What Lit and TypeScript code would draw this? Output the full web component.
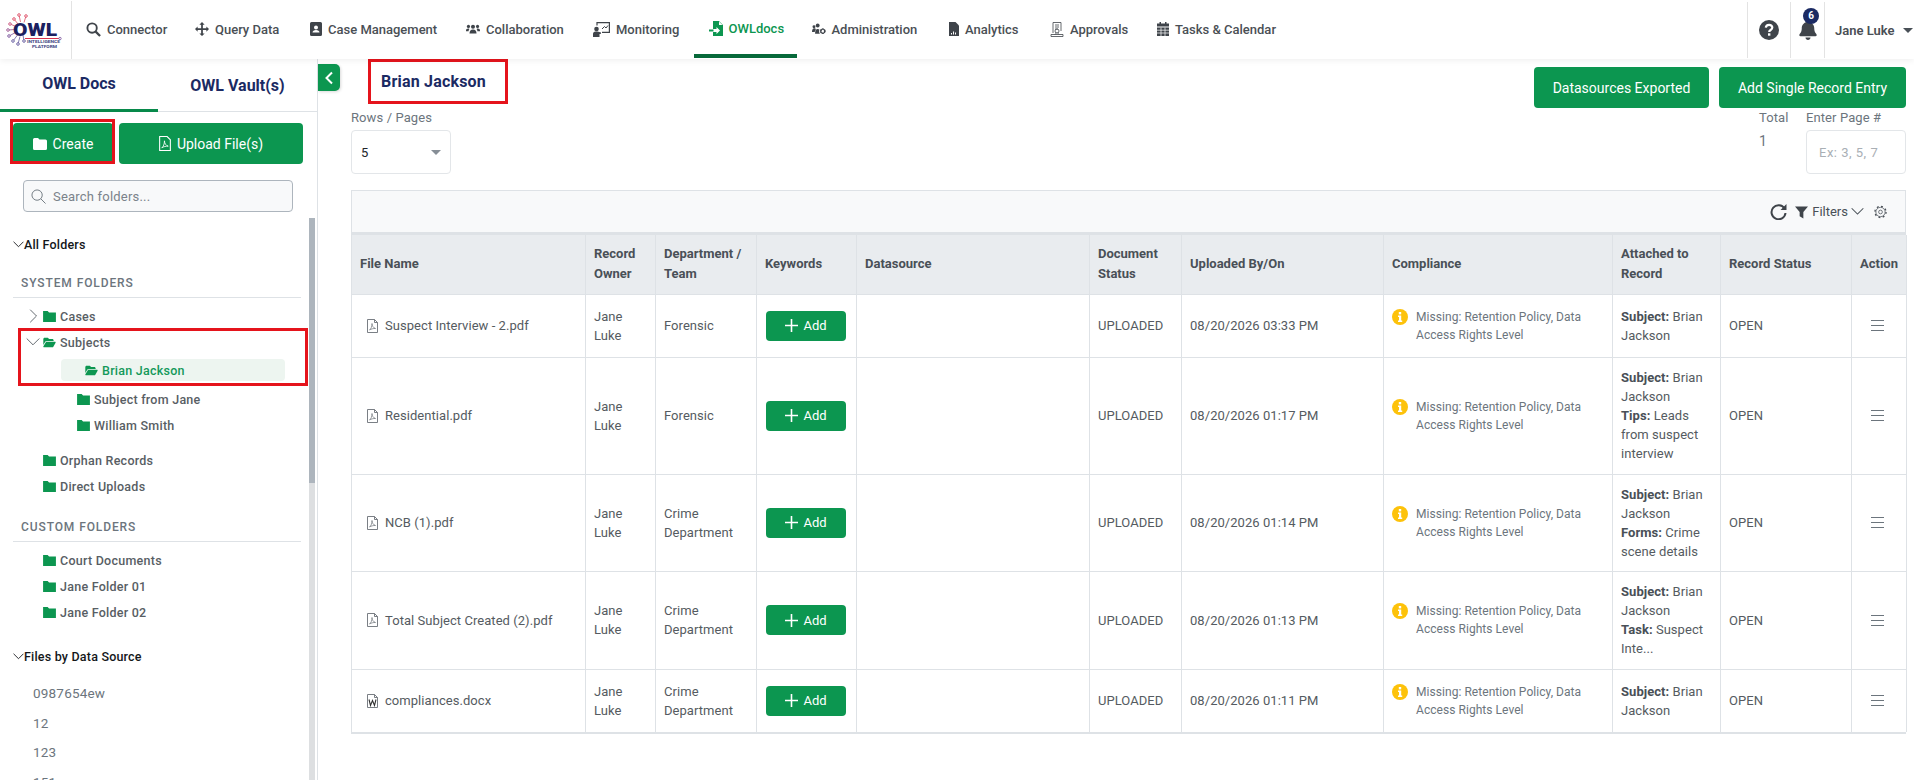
import { LitElement, css, html, svg } from 'lit';
import { customElement } from 'lit/decorators.js';

const folder = () => html`<svg class="folder" viewBox="0 0 14 12"><path d="M0 0h5l1.5 1.5H14V12H0z" /></svg>`;
const folderOpen = () => html`<svg class="folder" viewBox="0 0 576 512"><path d="M88.7 223.8L0 375.8V96C0 60.7 28.7 32 64 32H181.5c17 0 33.3 6.7 45.3 18.7l26.5 26.5c12 12 28.3 18.7 45.3 18.7H416c35.3 0 64 28.7 64 64v32H144c-22.8 0-43.8 12.1-55.3 31.8zm27.6 16.1C122.1 230 132.6 224 144 224H544c11.5 0 22 6.1 27.7 16.1s5.7 22.2-.1 32.1l-112 192C453.9 474 443.4 480 432 480H32c-11.5 0-22-6.1-27.7-16.1s-5.7-22.2 .1-32.1l112-192z" /></svg>`;
const chevDown = () => html`<svg class="chev" viewBox="0 0 10 10"><polyline points="0.5,2.5 5,7 9.5,2.5" /></svg>`;
const chevRight = () => html`<svg class="chev" viewBox="0 0 10 10"><polyline points="3,0.5 7.5,5 3,9.5" /></svg>`;
const pdf = () => html`<svg class="fileic" viewBox="0 0 11 14"><path class="ln" d="M.5.5h7l3 3v10H.5z" /><path class="ln" d="M7.5.5v3h3" /><path class="ln thin" d="M2.5 11c1.500-1 2.500-3.500 2.500-6.500C5 7 6.500 9 8.500 9.500 6.500 9.300 4 10 2.500 11z" /></svg>`;
const word = () => html`<svg class="fileic" viewBox="0 0 11 14"><path class="ln" d="M.5.5h7l3 3v10H.5z" /><path class="ln" d="M7.500.5v3h3" /><polyline class="ln wd" points="2,5.500 3.500,11.500 5.500,6.500 7.500,11.500 9,5.500" /></svg>`;

const navIcons: Record<string, any> = {
    connector: html`<svg class="nv" width="15" height="15" viewBox="0 0 16 16"><circle cx="6.500" cy="6.500" r="5" fill="none" stroke="currentColor" stroke-width="2" /><line x1="10.300" y1="10.300" x2="15" y2="15" stroke="currentColor" stroke-width="2.400" /></svg>`,
    query: html`<svg class="nv" width="14" height="14" viewBox="0 0 16 16"><path fill="currentColor" d="M8 0l3 3H9v4h4V5l3 3-3 3V9H9v4h2l-3 3-3-3h2V9H3v2L0 8l3-3v2h4V3H5z" /></svg>`,
    case: html`<svg class="nv" width="12" height="14" viewBox="0 0 12 14"><path fill="currentColor" fill-rule="evenodd" d="M1.500 0h9A1.500 1.500 0 0 1 12 1.500v11a1.500 1.500 0 0 1-1.500 1.500h-9A1.500 1.500 0 0 1 0 12.500v-11A1.500 1.500 0 0 1 1.500 0zM6 3.500a2 2 0 1 0 0 4 2 2 0 0 0 0-4zM2.500 10.500h7C9.500 9 8 8 6 8s-3.500 1-3.500 2.500z" /></svg>`,
    collab: html`<svg class="nv" width="14" height="12" viewBox="0 0 16 12"><g fill="currentColor"><circle cx="8" cy="3.500" r="2.300" /><circle cx="2.800" cy="3" r="1.800" /><circle cx="13.200" cy="3" r="1.800" /><path d="M4 11c0-3 1.500-4.500 4-4.500S12 8 12 11z" /><path d="M0 8c0-1.500 1-2.500 2.500-2.500.6 0 1 .1 1.400.4C3.200 6.700 3 7.500 3 8.500H0zM16 8c0-1.500-1-2.500-2.500-2.500-.6 0-1 .1-1.400.4.700.8.900 1.600.9 2.600h3z" /></g></svg>`,
    monitor: html`<svg class="nv" width="17" height="15" viewBox="0 0 17 15"><path fill="none" stroke="currentColor" stroke-width="1.200" d="M4 3.500V.6h12.400v9.800H9" /><path fill="none" stroke="currentColor" d="M9 7l2.500-2.500 1.500 1.500 2-2.500" /><circle cx="3.500" cy="7" r="2.300" fill="currentColor" /><path fill="currentColor" d="M0 15v-3c0-1.500 1-2.500 2.500-2.500h2L8 10.500v1.300L6.500 12v3z" /></svg>`,
    docs: html`<svg class="nv" width="14" height="15" viewBox="0 0 14 15"><path fill="currentColor" d="M4 0h6l4 4v11H4v-4h3.500v2L11 9.500 7.500 6v2H4zM10 .5V4h3.500z" /><path fill="currentColor" d="M0 8.500h4.500v2H0z" /></svg>`,
    admin: html`<svg class="nv" width="14" height="12" viewBox="0 0 16 13"><g fill="currentColor"><circle cx="6.500" cy="2.500" r="2.200" /><circle cx="2.300" cy="4" r="1.700" /><path d="M0 10c0-3 1-4.500 2.500-4.500 1 0 1.500.5 2 1L3 10zM3.500 12c0-3.500 1-5.500 3-5.500 1 0 1.500.3 2 .8-.7 1.500-.5 3.200.5 4.700z" /></g><circle cx="12.300" cy="9" r="2.300" fill="none" stroke="currentColor" stroke-width="1.800" stroke-dasharray="1.600 .7" /><circle cx="12.300" cy="9" r="2.500" fill="none" stroke="currentColor" /></svg>`,
    analytics: html`<svg class="nv" width="10" height="14" viewBox="0 0 10 14"><path fill="currentColor" d="M0 0h6.500L10 3.500V14H0z" /><path fill="#fff" d="M2 11h1v1.500H2zM4 9.500h1v3H4zM6 10.500h1v2H6z" /></svg>`,
    approvals: html`<svg class="nv" width="14" height="15" viewBox="0 0 14 15"><path fill="none" stroke="currentColor" stroke-width=".8" d="M3 11V.5h8V9M5 3h4M5 5h4M5 7h3" /><circle cx="7" cy="9" r="2" fill="none" stroke="currentColor" stroke-width=".8" /><path fill="none" stroke="currentColor" stroke-width=".8" d="M1 14.500v-2h12v2zM5 12.500c1-1 1-1.500 1-2M9 12.500c-1-1-1-1.500-1-2" /></svg>`,
    tasks: html`<svg class="nv" width="12" height="14" viewBox="0 0 12 14"><path fill="currentColor" d="M2.500 0h1.500v1.500h4V0h1.500v1.500H12v3H0v-3h2.500zM0 5.500h12V14H0z" /><path fill="none" stroke="#fff" stroke-width=".7" d="M0 8.200h12M0 11h12M4 5.500V14M8 5.500V14" /></svg>`,
};

const nav = [
    { label: 'Connector', icon: 'connector', w: 109 },
    { label: 'Query Data', icon: 'query', w: 115 },
    { label: 'Case Management', icon: 'case', w: 156 },
    { label: 'Collaboration', icon: 'collab', w: 127 },
    { label: 'Monitoring', icon: 'monitor', w: 115.5 },
    { label: 'OWLdocs', icon: 'docs', w: 103, active: true },
    { label: 'Administration', icon: 'admin', w: 137.5 },
    { label: 'Analytics', icon: 'analytics', w: 101 },
    { label: 'Approvals', icon: 'approvals', w: 107 },
    { label: 'Tasks & Calendar', icon: 'tasks', w: 149.5 },
];

const columns = [
    { label: 'File Name', w: 234 },
    { label: 'Record Owner', w: 70 },
    { label: 'Department / Team', w: 101 },
    { label: 'Keywords', w: 100 },
    { label: 'Datasource', w: 233 },
    { label: 'Document Status', w: 92 },
    { label: 'Uploaded By/On', w: 202 },
    { label: 'Compliance', w: 229 },
    { label: 'Attached to Record', w: 108 },
    { label: 'Record Status', w: 131 },
    { label: 'Action', w: 55 },
];

const rows = [
    { file: 'Suspect Interview - 2.pdf', dept: 'Forensic', date: '08/20/2026 03:33 PM', h: 63, attached: [['Subject:', 'Brian Jackson']] },
    { file: 'Residential.pdf', dept: 'Forensic', date: '08/20/2026 01:17 PM', h: 117, attached: [['Subject:', 'Brian Jackson'], ['Tips:', 'Leads from suspect interview']] },
    { file: 'NCB (1).pdf', dept: 'Crime Department', date: '08/20/2026 01:14 PM', h: 97, attached: [['Subject:', 'Brian Jackson'], ['Forms:', 'Crime scene details']] },
    { file: 'Total Subject Created (2).pdf', dept: 'Crime Department', date: '08/20/2026 01:13 PM', h: 98, attached: [['Subject:', 'Brian Jackson'], ['Task:', 'Suspect Inte...']] },
    { file: 'compliances.docx', dept: 'Crime Department', date: '08/20/2026 01:11 PM', h: 63, word: true, attached: [['Subject:', 'Brian Jackson']] },
];

@customElement('app-root')
export class AppRoot extends LitElement {
    static styles = css`
        :host {
            display: block;
            height: 780px;
            overflow: hidden;
            background: #fff;
            font-family: Roboto, "Liberation Sans", sans-serif;
            font-size: 13px;
            color: #495057;
        }

        * { box-sizing: border-box; }

        /* header */
        .header {
            display: flex;
            height: 59px;
            background: #fff;
            box-shadow: 0 2px 6px rgba(0, 0, 0, 0.06);
            position: relative;
            z-index: 2;
        }

        .logo {
            width: 71.500px;
            margin-top: 1px;
            border-right: 1px solid #e3e3e3;
            flex: none;
        }

        .nav {
            display: flex;
            flex: 1;
        }

        .nav-item {
            display: flex;
            align-items: center;
            flex: none;
            gap: 6px;
            height: 58px;
            padding: 4px 0 0 14.500px;
            border-bottom: 4px solid transparent;
            font-weight: 500;
            color: #4a4f55;
            white-space: nowrap;
        }

        .nav-item.active {
            color: #0c9650;
            border-bottom-color: #07693a;
            padding-top: 2px;
        }

        .nv { flex: none; color: #3f444a; }
        .active .nv { color: #0c9650; }

        .head-cell {
            display: flex;
            align-items: center;
            justify-content: center;
            height: 56px;
            margin-top: 2px;
            border-left: 1px solid #e3e3e3;
            position: relative;
        }

        .help { width: 43px; }
        .bell { width: 34px; }
        .user { width: 90px; gap: 8px; font-weight: 600; color: #4a4f55; justify-content: flex-start; padding-left: 10px; }
        .caret { width: 0; height: 0; border-left: 5px solid transparent; border-right: 5px solid transparent; border-top: 5px solid #495057; }

        .badge {
            position: absolute;
            top: 6px;
            left: 12px;
            width: 16px;
            height: 16px;
            border-radius: 50%;
            background: #1b2a63;
            color: #fff;
            font-size: 10px;
            font-weight: 700;
            text-align: center;
            line-height: 16px;
        }

        /* body layout */
        .body { display: flex; height: 721px; }

        .sidebar {
            display: flex;
            flex-direction: column;
            width: 318px;
            flex: none;
            border-right: 1px solid #dee2e6;
            overflow: hidden;
        }

        .tabs {
            display: flex;
            height: 53px;
            border-bottom: 1px solid #dee2e6;
            flex: none;
        }

        .tab {
            width: 158px;
            height: 53px;
            padding-top: 13px;
            text-align: center;
            font-size: 16px;
            font-weight: 700;
            line-height: 24px;
            color: #1b2a63;
        }

        .tab.on { border-bottom: 3px solid #07894a; }
        .tab.off { padding-top: 15px; width: 159px; }

        .actions {
            display: flex;
            gap: 6px;
            padding: 11px 14px 0 13px;
            position: relative;
            flex: none;
        }

        .btn {
            display: flex;
            align-items: center;
            justify-content: center;
            gap: 6px;
            height: 41px;
            border: 0;
            border-radius: 4px;
            background: #0c9650;
            color: #fff;
            font: inherit;
            font-size: 14px;
        }

        .btn svg { fill: #fff; }
        .create { width: 100px; }
        .upload { width: 184px; }

        .mark {
            position: absolute;
            border: 3px solid #e5141c;
            pointer-events: none;
        }

        .mark.create-mark { left: 10px; top: 7px; width: 105px; height: 45px; }
        .mark.tree-mark { left: 18px; top: 25px; width: 290px; height: 58px; }

        .search {
            display: flex;
            align-items: center;
            gap: 5px;
            width: 270px;
            height: 32px;
            margin: 16px 0 0 23px;
            padding: 0 7px;
            background: #f8f9fa;
            border: 1px solid #adb5bd;
            border-radius: 4px;
            flex: none;
        }

        .search input {
            flex: 1;
            min-width: 0;
            border: 0;
            outline: 0;
            background: transparent;
            font: inherit;
            letter-spacing: 0.2px;
        }

        .search input::placeholder { color: #7b838a; opacity: 1; }

        .side-body { display: flex; flex: 1; min-height: 0; margin-top: 6px; }
        .tree { width: 309px; flex: none; padding-top: 16px; overflow: hidden; }

        .scroll { width: 6px; flex: none; background: #dddfe1; }
        .thumb { height: 265px; background: #adb5bd; }

        .group-title {
            display: flex;
            align-items: center;
            height: 20px;
            padding-left: 13px;
            font-weight: 500;
            font-size: 12.500px;
            color: #14171a;
            letter-spacing: 0.2px;
        }

        .group-title .chev { width: 11px; height: 11px; stroke: #14171a; }

        .heading {
            height: 29px;
            margin: 15px 8px 5px 13px;
            padding-left: 8px;
            border-bottom: 1px solid #dee2e6;
            font-size: 12px;
            font-weight: 500;
            line-height: 28px;
            letter-spacing: 0.9px;
            color: #6c757d;
        }

        .heading.custom { margin-top: 14px; }

        .branch { position: relative; }

        .row {
            display: flex;
            align-items: center;
            gap: 4px;
            height: 26px;
            padding-left: 43px;
            font-size: 12.500px;
            font-weight: 500;
            color: #585e64;
            letter-spacing: 0.25px;
        }

        .row.child { padding-left: 77px; }
        .row.gap { margin-top: 9px; }
        .row.has-chev { padding-left: 26px; }
        .row.has-chev .folder { margin-left: -1px; }

        .row.selected {
            height: 22px;
            margin: 4px 24px 5px 61px;
            padding-left: 24px;
            border-radius: 4px;
            background: #edf5f0;
            color: #14995a;
        }

        .folder { width: 13px; height: 11px; fill: #0c9650; flex: none; }
        .chev { width: 10px; height: 10px; fill: none; stroke: #495057; stroke-width: 0.800; flex: none; }
        .row .chev { width: 14px; height: 14px; stroke-width: 0.600; }

        .source-list { margin: 13px 0 0 33px; }
        .source-list div { height: 29.500px; line-height: 29.500px; font-size: 13.500px; color: #6c757d; letter-spacing: 0.2px; }
        .files-title { margin-top: 21px; }

        /* main */
        .main {
            flex: 1;
            min-width: 0;
            padding: 0 8px 0 33px;
            position: relative;
        }

        .toggle {
            position: absolute;
            left: 0;
            top: 5px;
            display: flex;
            align-items: center;
            justify-content: center;
            width: 22px;
            height: 27px;
            border-radius: 0 5px 5px 0;
            background: #0c9650;
            box-shadow: 1px 1px 3px rgba(0, 0, 0, 0.15);
        }

        .top-row { display: flex; justify-content: space-between; align-items: flex-start; }

        .title {
            display: flex;
            align-items: center;
            width: 140px;
            height: 45px;
            margin-left: 17px;
            padding-left: 10px;
            border: 3px solid #e5141c;
            font-size: 16px;
            font-weight: 700;
            color: #1b2a63;
            letter-spacing: 0.2px;
        }

        .top-actions { display: flex; gap: 10px; padding-top: 8px; }
        .top-actions .btn { height: 41px; }
        .exported { width: 175px; }
        .single { width: 187px; }

        .controls { display: flex; justify-content: space-between; margin-top: 2px; }
        .controls label, .field-label { display: block; height: 16px; line-height: 16px; margin-bottom: 4px; color: #6c757d; letter-spacing: 0.1px; }
        .right-controls { display: flex; }
        .total { width: 47px; }
        .total-val { padding-top: 3px; font-size: 14px; color: #6c757d; }

        .select, .page-input {
            width: 100px;
            height: 44px;
            border: 1px solid #e3e6e9;
            border-radius: 4px;
        }

        .select {
            display: flex;
            align-items: center;
            justify-content: space-between;
            padding: 0 9px;
            color: #212529;
        }

        .select .caret { border-top-color: #868e96; }

        .page-input {
            display: block;
            padding: 0 12px;
            font: inherit;
            outline: 0;
            letter-spacing: 0.5px;
        }

        .page-input::placeholder { color: #a9afb5; opacity: 1; }

        /* table */
        .table-wrap {
            margin-top: 16px;
            border-top: 1px solid #dee2e6;
            border-bottom: 2px solid #dee2e6;
            width: 1555px;
        }

        .toolbar {
            display: flex;
            align-items: center;
            justify-content: flex-end;
            padding-right: 18px;
            background: #f8f9fa;
            border-bottom: 3px solid #dee2e6;
            border-left: 1px solid #dee2e6;
            border-right: 1px solid #dee2e6;
            height: 44px;
            color: #495057;
        }

        .toolbar svg { flex: none; }
        .filters { margin: 0 3px 0 4px; }
        .refresh-gap { margin-left: 8px; }
        .gear-gap { margin-left: 10px; }
        .toolbar .chev { width: 13px; height: 13px; }

        table {
            width: 1555px;
            table-layout: fixed;
            border-collapse: collapse;
        }

        th, td {
            border: 1px solid #dee2e6;
            padding: 0 8px;
            text-align: left;
            vertical-align: middle;
            line-height: 19px;
        }

        tr:last-child td { border-bottom: 0; }
        tr:first-child th { border-top: 0; }

        th {
            height: 59px;
            background: #e9ecef;
            font-weight: 700;
            color: #495057;
            line-height: 20px;
        }

        td { color: #555b61; letter-spacing: 0.05px; }

        .file-cell { display: flex; align-items: center; gap: 7px; padding-left: 7px; }
        .fileic { width: 11px; height: 14px; flex: none; }
        .ln { fill: none; stroke: #6b7177; stroke-width: 0.900; }
        .ln.thin { stroke-width: 0.700; }
        .ln.wd { stroke: #333; stroke-width: 1.100; }

        .add {
            width: 80px;
            height: 30px;
            margin-left: 1px;
            gap: 5px;
            font-size: 13px;
        }

        .compliance {
            display: flex;
            gap: 8px;
            font-size: 12px;
            line-height: 18px;
            color: #6c757d;
            letter-spacing: 0.05px;
        }

        .compliance svg { flex: none; margin-top: 1px; }
        .attached b { font-weight: 700; color: #495057; }

        .action { text-align: center; padding: 0 3px 0 0; line-height: 0; }
    `;

    render() {
        return html`
            <div class="header">
                <div class="logo">${this.renderLogo()}</div>
                <div class="nav">
                    ${nav.map(n => html`<div class="nav-item ${n.active ? 'active' : ''}" style="width:${n.w}px">${navIcons[n.icon]}<span>${n.label}</span></div>`)}
                </div>
                <div class="head-cell help">
                    <svg width="20" height="20" viewBox="0 0 20 20"><circle cx="10" cy="10" r="10" fill="#3f444a" /><path d="M6.800 7.600C7 5.500 8.500 4.800 10.100 4.800c1.900 0 3.200 1.100 3.200 2.700 0 2.600-3.100 2.300-3.100 4.400" fill="none" stroke="#fff" stroke-width="2.200" /><rect x="9" y="13.300" width="2.400" height="2.400" fill="#fff" /></svg>
                </div>
                <div class="head-cell bell">
                    <svg width="18" height="20" viewBox="0 0 448 512" fill="#3f444a"><path d="M224 0c-17.700 0-32 14.300-32 32V51.200C119 66 64 130.600 64 208v18.800c0 47-17.300 92.400-48.500 127.600l-7.400 8.300c-8.400 9.400-10.400 22.900-5.300 34.400S19.400 416 32 416H416c12.600 0 24-7.400 29.200-18.900s3.100-25-5.300-34.400l-7.400-8.300C401.300 319.200 384 273.900 384 226.800V208c0-77.400-55-142-128-156.800V32c0-17.700-14.300-32-32-32zm45.300 493.300c12-12 18.700-28.300 18.700-45.300H224 160c0 17 6.700 33.300 18.700 45.300s28.300 18.700 45.300 18.700s33.300-6.700 45.300-18.700z" /></svg>
                    <span class="badge">6</span>
                </div>
                <div class="head-cell user">Jane Luke <span class="caret"></span></div>
            </div>
            <div class="body">
                ${this.renderSidebar()}
                <div class="main">
                    <div class="toggle"><svg width="10" height="14" viewBox="0 0 10 14"><polyline points="8,1.500 2.500,7 8,12.500" fill="none" stroke="#fff" stroke-width="2" /></svg></div>
                    <div class="top-row">
                        <div class="title">Brian Jackson</div>
                        <div class="top-actions">
                            <button class="btn exported">Datasources Exported</button>
                            <button class="btn single">Add Single Record Entry</button>
                        </div>
                    </div>
                    <div class="controls">
                        <div>
                            <label>Rows / Pages</label>
                            <div class="select"><span>5</span><span class="caret"></span></div>
                        </div>
                        <div class="right-controls">
                            <div class="total">
                                <div class="field-label">Total</div>
                                <div class="total-val">1</div>
                            </div>
                            <div>
                                <div class="field-label">Enter Page #</div>
                                <input class="page-input" placeholder="Ex: 3, 5, 7" />
                            </div>
                        </div>
                    </div>
                    ${this.renderTable()}
                </div>
            </div>
        `;
    }

    renderLogo() {
        // circuit traces around the owl wordmark, red at the top going to purple at the bottom
        const nodes: [number, number, string][] = [
            [26, 15, '#d8344f'], [19, 14, '#d8344f'], [14, 18, '#d8344f'], [10, 23, '#c23a6a'], [8, 29, '#8a3c80'],
            [9, 35, '#6a3f8f'], [13, 40, '#4f4490'], [18, 43, '#4f4490'], [24, 40, '#4f4490'],
        ];
        return html`<svg width="71" height="58" viewBox="0 0 71 58">
            ${nodes.map(n => svg`<line x1="${n[0]}" y1="${n[1]}" x2="${n[0] * 0.5 + 11}" y2="${n[1] * 0.5 + 14}" stroke="${n[2]}" stroke-width=".7" /><circle cx="${n[0]}" cy="${n[1]}" r="1.300" fill="#fff" stroke="${n[2]}" stroke-width=".8" />`)}
            <text x="13" y="35" font-family="Roboto, sans-serif" font-weight="900" font-size="18" fill="#1b2060" textLength="44" lengthAdjust="spacingAndGlyphs">OWL</text>
            <line x1="25" y1="37.500" x2="60" y2="37.500" stroke="#d8344f" stroke-width="1" />
            <circle cx="60" cy="37.500" r="1.200" fill="#fff" stroke="#6a3f8f" stroke-width=".7" />
            <text x="27" y="42" font-family="Roboto, sans-serif" font-weight="700" font-size="4" fill="#3a3f80" textLength="33" lengthAdjust="spacingAndGlyphs">INTELLIGENCE</text>
            <text x="32" y="46.500" font-family="Roboto, sans-serif" font-weight="700" font-size="4" fill="#3a3f80" textLength="25" lengthAdjust="spacingAndGlyphs">PLATFORM</text>
        </svg>`;
    }

    renderSidebar() {
        return html`
            <div class="sidebar">
                <div class="tabs">
                    <div class="tab on">OWL Docs</div>
                    <div class="tab off">OWL Vault(s)</div>
                </div>
                <div class="actions">
                    <button class="btn create">
                        <svg width="14" height="12" viewBox="0 0 14 12"><path d="M1.500 0h3.500l1.500 1.500h6A1.500 1.500 0 0 1 14 3v7.500a1.500 1.500 0 0 1-1.500 1.500h-11A1.500 1.500 0 0 1 0 10.500v-9A1.500 1.500 0 0 1 1.500 0z" /></svg>
                        Create
                    </button>
                    <button class="btn upload">
                        <svg width="12" height="15" viewBox="0 0 11 14"><path d="M.5.5h7l3 3v10H.5z" fill="none" stroke="#fff" /><path d="M2.500 11c1.500-1 2.500-3.500 2.500-6.500C5 7 6.500 9 8.500 9.500 6.500 9.300 4 10 2.500 11z" fill="none" stroke="#fff" stroke-width=".8" /></svg>
                        Upload File(s)
                    </button>
                    <div class="mark create-mark"></div>
                </div>
                <div class="search">
                    <svg width="15" height="15" viewBox="0 0 16 16"><circle cx="6.500" cy="6.500" r="5.500" fill="none" stroke="#6c757d" /><line x1="10.500" y1="10.500" x2="15.500" y2="15.500" stroke="#6c757d" /></svg>
                    <input placeholder="Search folders..." />
                </div>
                <div class="side-body">
                    <div class="tree">
                        <div class="group-title">${chevDown()}All Folders</div>
                        <div class="heading">SYSTEM FOLDERS</div>
                        <div class="branch">
                            <div class="row has-chev">${chevRight()}${folder()}Cases</div>
                            <div class="row has-chev">${chevDown()}${folderOpen()}Subjects</div>
                            <div class="row selected">${folderOpen()}Brian Jackson</div>
                            <div class="row child">${folder()}Subject from Jane</div>
                            <div class="row child">${folder()}William Smith</div>
                            <div class="row gap">${folder()}Orphan Records</div>
                            <div class="row">${folder()}Direct Uploads</div>
                            <div class="mark tree-mark"></div>
                        </div>
                        <div class="heading custom">CUSTOM FOLDERS</div>
                        <div class="row">${folder()}Court Documents</div>
                        <div class="row">${folder()}Jane Folder 01</div>
                        <div class="row">${folder()}Jane Folder 02</div>
                        <div class="group-title files-title">${chevDown()}Files by Data Source</div>
                        <div class="source-list">
                            <div>0987654ew</div>
                            <div>12</div>
                            <div>123</div>
                            <div>151</div>
                        </div>
                    </div>
                    <div class="scroll"><div class="thumb"></div></div>
                </div>
            </div>
        `;
    }

    renderTable() {
        return html`
            <div class="table-wrap">
                <div class="toolbar">
                    <svg width="17" height="17" viewBox="0 0 17 17"><path d="M14.500 5.500A7 7 0 1 0 15.500 10" fill="none" stroke="#3f444a" stroke-width="2" /><path d="M16.500 1v6h-6z" fill="#3f444a" /></svg>
                    <svg class="refresh-gap" width="13" height="14" viewBox="0 0 14 14"><path d="M0 1h14L9 7v7L5 11.500V7z" fill="#3f444a" /></svg>
                    <span class="filters">Filters</span>
                    <svg class="chev" viewBox="0 0 10 10"><polyline points="0.500,2.500 5,7 9.500,2.500" /></svg>
                    <svg class="gear-gap" width="13" height="14" viewBox="0 0 14 14"><circle cx="7" cy="7" r="2" fill="none" stroke="#495057" stroke-width=".8" /><circle cx="7" cy="7" r="5" fill="none" stroke="#495057" stroke-width=".8" /><circle cx="7" cy="7" r="6" fill="none" stroke="#495057" stroke-width="1.400" stroke-dasharray="2 2.700" /></svg>
                </div>
                <table>
                    <colgroup>${columns.map(c => html`<col style="width:${c.w}px" />`)}</colgroup>
                    <thead><tr>${columns.map(c => html`<th>${c.label}</th>`)}</tr></thead>
                    <tbody>
                        ${rows.map(r => html`
                            <tr style="height:${r.h}px">
                                <td><div class="file-cell">${r.word ? word() : pdf()}<span>${r.file}</span></div></td>
                                <td>Jane Luke</td>
                                <td>${r.dept}</td>
                                <td><button class="btn add"><svg width="13" height="13" viewBox="0 0 13 13"><path d="M6.500 0v13M0 6.500h13" stroke="#fff" stroke-width="1.600" /></svg>Add</button></td>
                                <td></td>
                                <td>UPLOADED</td>
                                <td>${r.date}</td>
                                <td>
                                    <div class="compliance">
                                        <svg width="16" height="16" viewBox="0 0 16 16"><circle cx="8" cy="8" r="8" fill="#fdc20a" /><rect x="6.800" y="3" width="2.400" height="2.400" fill="#fff" /><path d="M6 6.500h3.200v5h1v1.500H6v-1.500h1v-3.500H6z" fill="#fff" /></svg>
                                        <span>Missing: Retention Policy, Data Access Rights Level</span>
                                    </div>
                                </td>
                                <td class="attached">${r.attached.map(a => html`<div><b>${a[0]}</b> ${a[1]}</div>`)}</td>
                                <td>OPEN</td>
                                <td class="action"><svg width="13" height="11" viewBox="0 0 13 11"><path d="M0 .5h13M0 5.500h13M0 10.500h13" stroke="#6c757d" stroke-width="1" /></svg></td>
                            </tr>
                        `)}
                    </tbody>
                </table>
            </div>
        `;
    }
}
